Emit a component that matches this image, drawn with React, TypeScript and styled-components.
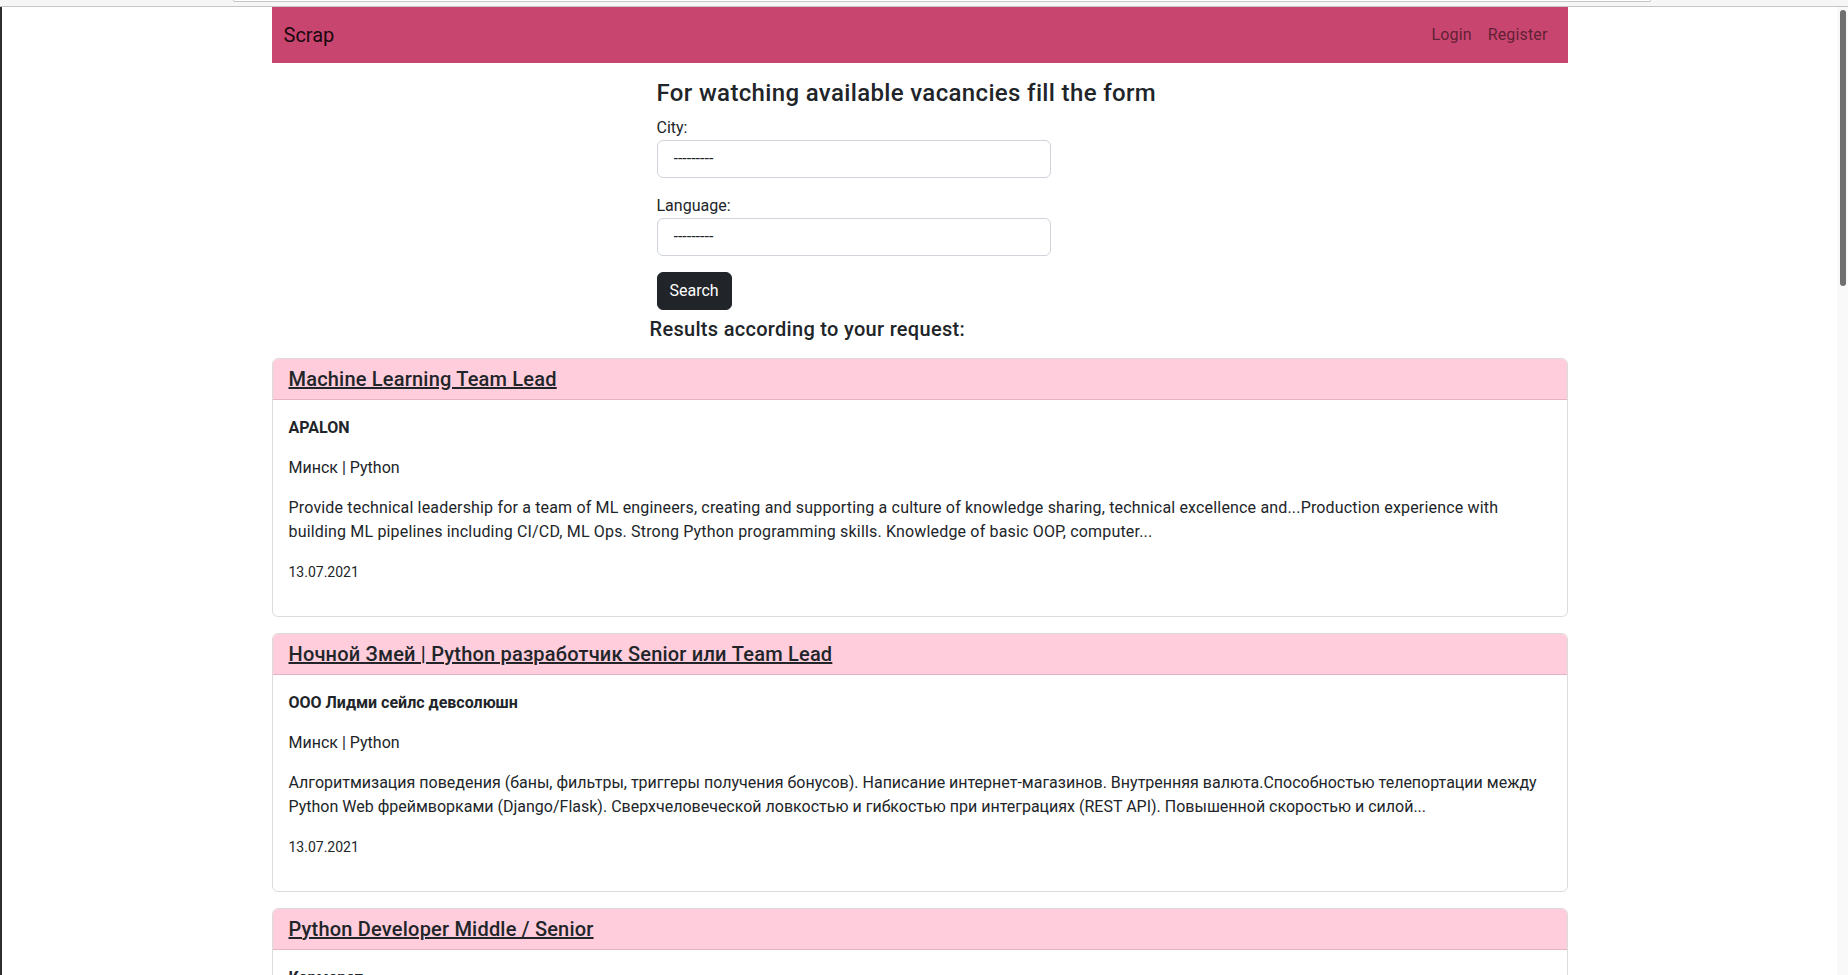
import React from "react";
import styled, { createGlobalStyle } from "styled-components";

const GlobalStyle = createGlobalStyle`
  html, body {
    margin: 0;
    padding: 0;
    height: 100%;
    overflow: hidden;
    background: #ffffff;
  }
  body {
    font-family: Roboto, "Liberation Sans", Arial, sans-serif;
    font-size: 16px;
    line-height: 1.5;
    color: #212529;
  }
  *, *::before, *::after { box-sizing: border-box; }
`;

const Frame = styled.div`
  height: 975px;
  display: flex;
  flex-direction: column;
  overflow: hidden;
`;

const BrowserStrip = styled.div`
  flex: none;
  height: 7px;
  background: #f6f6f6;
  border-bottom: 1px solid #c6c6c6;
  display: flex;
`;

const AddressEdge = styled.div`
  margin-left: 233px;
  width: 1418px;
  height: 2px;
  background: #ffffff;
  border: 1px solid #c6c6c6;
  border-top: none;
  border-radius: 0 0 2px 2px;
`;

const Viewport = styled.div`
  flex: 1;
  min-height: 0;
  display: flex;
`;

const LeftEdge = styled.div`
  flex: none;
  width: 2px;
  background: #2e2e2e;
`;

const Page = styled.main`
  flex: 1;
  min-width: 0;
  overflow: hidden;
`;

const ScrollTrack = styled.div`
  flex: none;
  width: 11px;
  background: #f9f9f9;
  padding: 3px 2px 0 3px;
`;

const ScrollThumb = styled.div`
  width: 6px;
  height: 276px;
  border-radius: 3px;
  background: #6f6f6f;
`;

const Container = styled.div`
  width: 1320px;
  margin: 0 auto;
  padding: 0 12px;
`;

const Navbar = styled.nav`
  height: 56px;
  background: #c8456f;
  display: flex;
  align-items: center;
  justify-content: space-between;
  padding: 8px 12px;
`;

const Brand = styled.a`
  font-size: 20px;
  line-height: 30px;
  color: rgba(0, 0, 0, 0.9);
  text-decoration: none;
`;

const NavLinks = styled.div`
  display: flex;
`;

const NavLink = styled.a`
  padding: 8px;
  line-height: 24px;
  letter-spacing: 0.15px;
  color: rgba(0, 0, 0, 0.55);
  text-decoration: none;
`;

const SearchForm = styled.form`
  margin: 16px 0 0 385px;
  width: 394px;
`;

const FormTitle = styled.h4`
  margin: 0 0 8px;
  font-size: 24px;
  font-weight: 500;
  line-height: 1.2;
  letter-spacing: 0.35px;
  white-space: nowrap;
`;

const FieldLabel = styled.label`
  display: block;
  line-height: 24px;
`;

const SelectBox = styled.select`
  display: block;
  width: 100%;
  height: 38px;
  margin: 0 0 16px;
  padding: 6px 12px 6px 16px;
  font: inherit;
  color: #212529;
  background: #ffffff;
  border: 1px solid #ced4da;
  border-radius: 6px;
  appearance: none;
  -webkit-appearance: none;
`;

const SearchButton = styled.button`
  height: 38px;
  padding: 6px 12px;
  font: inherit;
  color: #ffffff;
  background: #212529;
  border: 1px solid #212529;
  border-radius: 6px;
`;

const ResultsTitle = styled.h5`
  margin: 7px 0 17px 378px;
  font-size: 20px;
  font-weight: 500;
  line-height: 1.2;
  letter-spacing: 0.3px;
`;

const Card = styled.article`
  border: 1px solid rgba(0, 0, 0, 0.14);
  border-radius: 6px;
  margin-bottom: 16px;
  overflow: hidden;
`;

const CardHeader = styled.header`
  background: #ffcddb;
  padding: 8px 16px;
  border-bottom: 1px solid rgba(0, 0, 0, 0.12);
`;

const CardTitle = styled.h5`
  margin: 0;
  font-size: 20px;
  font-weight: 500;
  line-height: 1.2;
  letter-spacing: 0.2px;
`;

const TitleLink = styled.a`
  color: #212529;
  text-decoration: underline;
`;

const CardBody = styled.div`
  padding: 16px;
`;

const CardText = styled.p<{ $bold?: boolean }>`
  margin: 0 0 16px;
  font-weight: ${(p) => (p.$bold ? 700 : 400)};

  &:lang(en) {
    letter-spacing: 0.17px;
  }
`;

const DateText = styled.small`
  font-size: 14px;
`;

type Vacancy = {
  title: string;
  company: string;
  meta: string;
  description: string;
  lang: string;
  date: string;
};

const vacancies: Vacancy[] = [
  {
    title: "Machine Learning Team Lead",
    company: "APALON",
    meta: "Минск | Python",
    description:
      "Provide technical leadership for a team of ML engineers, creating and supporting a culture of knowledge sharing, technical excellence and...Production experience with building ML pipelines including CI/CD, ML Ops. Strong Python programming skills. Knowledge of basic OOP, computer...",
    lang: "en",
    date: "13.07.2021",
  },
  {
    title: "Ночной Змей | Python разработчик Senior или Team Lead",
    company: "ООО Лидми сейлс девсолюшн",
    meta: "Минск | Python",
    description:
      "Алгоритмизация поведения (баны, фильтры, триггеры получения бонусов). Написание интернет-магазинов. Внутренняя валюта.Способностью телепортации между Python Web фреймворками (Django/Flask). Сверхчеловеческой ловкостью и гибкостью при интеграциях (REST API). Повышенной скоростью и силой...",
    lang: "ru",
    date: "13.07.2021",
  },
  {
    title: "Python Developer Middle / Senior",
    company: "Кармерат",
    meta: "Минск | Python",
    description:
      "Разработка и поддержка backend-сервисов на Python. Опыт работы с Django, PostgreSQL, Redis. Умение писать чистый и поддерживаемый код...",
    lang: "ru",
    date: "13.07.2021",
  },
];

export default function App() {
  return (
    <>
      <GlobalStyle />
      <Frame>
        <BrowserStrip>
          <AddressEdge />
        </BrowserStrip>
        <Viewport>
          <LeftEdge />
          <Page>
            <Container>
              <Navbar>
                <Brand href="#">Scrap</Brand>
                <NavLinks>
                  <NavLink href="#">Login</NavLink>
                  <NavLink href="#">Register</NavLink>
                </NavLinks>
              </Navbar>

              <SearchForm onSubmit={(e) => e.preventDefault()}>
                <FormTitle>For watching available vacancies fill the form</FormTitle>
                <FieldLabel htmlFor="city">City:</FieldLabel>
                <SelectBox id="city" defaultValue="">
                  <option value="">---------</option>
                </SelectBox>
                <FieldLabel htmlFor="language">Language:</FieldLabel>
                <SelectBox id="language" defaultValue="">
                  <option value="">---------</option>
                </SelectBox>
                <SearchButton type="submit">Search</SearchButton>
              </SearchForm>

              <ResultsTitle>Results according to your request:</ResultsTitle>

              {vacancies.map((v) => (
                <Card key={v.title}>
                  <CardHeader>
                    <CardTitle>
                      <TitleLink href="#">{v.title}</TitleLink>
                    </CardTitle>
                  </CardHeader>
                  <CardBody>
                    <CardText $bold>{v.company}</CardText>
                    <CardText>{v.meta}</CardText>
                    <CardText lang={v.lang}>{v.description}</CardText>
                    <CardText>
                      <DateText>{v.date}</DateText>
                    </CardText>
                  </CardBody>
                </Card>
              ))}
            </Container>
          </Page>
          <ScrollTrack>
            <ScrollThumb />
          </ScrollTrack>
        </Viewport>
      </Frame>
    </>
  );
}
